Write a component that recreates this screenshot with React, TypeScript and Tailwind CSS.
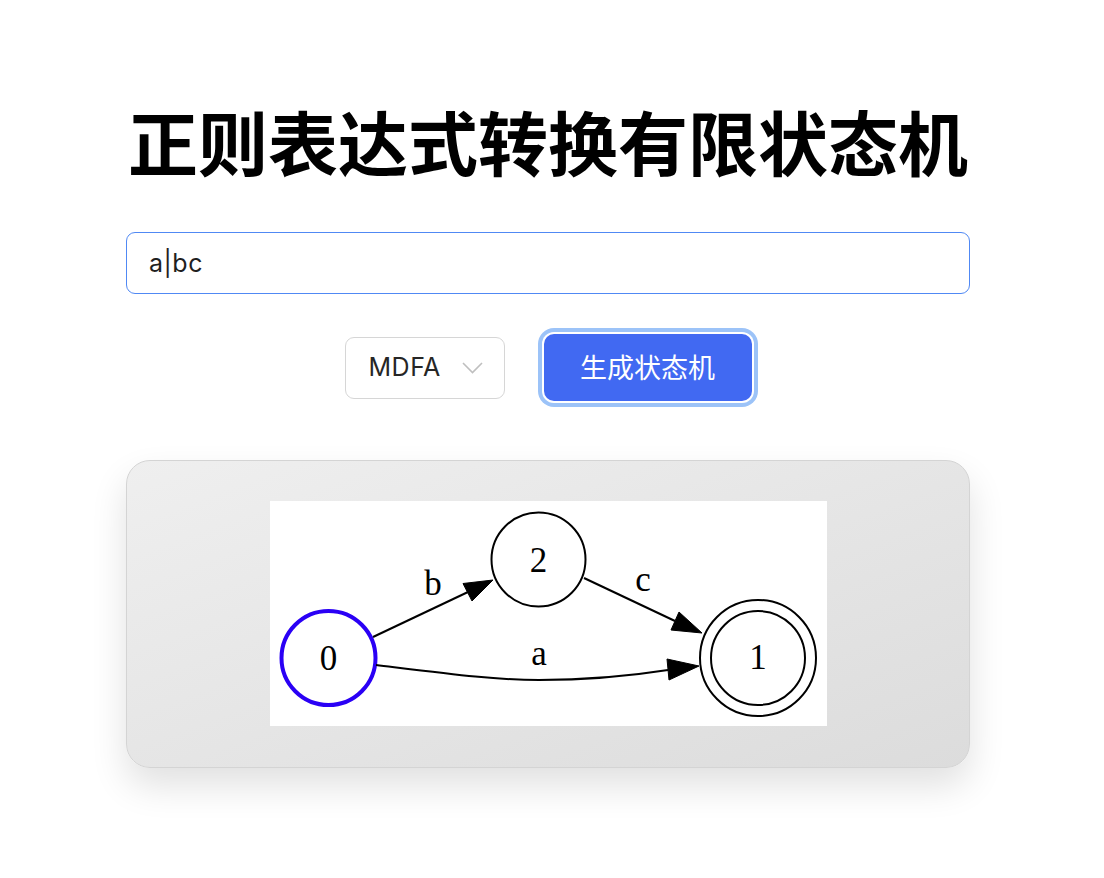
import { useState } from 'react';

const UI_FONT = { fontFamily: 'Inter, "Noto Sans CJK SC", sans-serif' };
const TITLE_FONT = { fontFamily: '"Noto Sans CJK SC", "Noto Sans", sans-serif' };

// State machine drawing (graphviz style output)
const StateGraph = () => (
    <svg width="557" height="225" viewBox="0 0 557 225" className="block bg-white">
        <g fontFamily='"Liberation Serif", serif' fontSize="35" textAnchor="middle" fill="#000">
            {/* node 0 - start */}
            <circle cx="58.5" cy="157" r="47" fill="none" stroke="#2a00f5" strokeWidth="4" />
            <text x="58.5" y="169">0</text>

            {/* node 2 */}
            <circle cx="268.5" cy="58.5" r="47" fill="none" stroke="#000" strokeWidth="2" />
            <text x="268.5" y="71">2</text>

            {/* node 1 - accepting */}
            <circle cx="488" cy="157" r="58" fill="none" stroke="#000" strokeWidth="2" />
            <circle cx="488" cy="157" r="47" fill="none" stroke="#000" strokeWidth="2" />
            <text x="488" y="168">1</text>

            {/* 0 -> 2 : b */}
            <path d="M103 136 L198 91" stroke="#000" strokeWidth="2" fill="none" />
            <polygon points="223,79 193,82.5 202,100" fill="#000" stroke="#000" strokeWidth="1" />
            <text x="163" y="94">b</text>

            {/* 2 -> 1 : c */}
            <path d="M314 77 L405 120" stroke="#000" strokeWidth="2" fill="none" />
            <polygon points="432,132 401,129 409,111" fill="#000" stroke="#000" strokeWidth="1" />
            <text x="373" y="90">c</text>

            {/* 0 -> 1 : a */}
            <path d="M106 164 C180 173 225 179 269 179 C318 179 360 175 398 169" stroke="#000" strokeWidth="2" fill="none" />
            <polygon points="429,165 397,158 399,179" fill="#000" stroke="#000" strokeWidth="1" />
            <text x="269" y="164">a</text>
        </g>
    </svg>
);

const App = () => {
    const [regex, setRegex] = useState('a|bc');

    return (
        <div className="min-h-screen bg-white" style={UI_FONT}>
            <div className="ml-[126px] flex w-[844px] flex-col pt-[106px]">
                <h1 className="text-center text-[70px] leading-none font-bold text-black" style={TITLE_FONT}>
                    正则表达式转换有限状态机
                </h1>

                <input
                    className="mt-[56px] h-[62px] w-full rounded-[9px] border-[1.5px] border-[#5089f4] px-[22px] text-[25px] tracking-[0.02em] text-[#1f1f1f] outline-none"
                    value={regex}
                    onChange={(e) => setRegex(e.target.value)}
                />

                <div className="mt-[40px] flex items-center justify-center gap-[39px]">
                    <div className="flex h-[62px] w-[160px] items-center justify-between rounded-[9px] border border-[#d6d6d6] bg-white pr-[21px] pl-[23px]">
                        <span className="text-[25px] tracking-[0.02em] text-[#262626]">MDFA</span>
                        <svg width="21" height="12" viewBox="0 0 21 12" fill="none">
                            <polyline points="1,1 10.5,10.5 20,1" stroke="#bfbfbf" strokeWidth="1.6" />
                        </svg>
                    </div>
                    <button
                        className="h-[67px] w-[208px] rounded-[10px] bg-[#4169f2] text-[27px] text-white ring-4 ring-[#9cc3f8] ring-offset-2 ring-offset-white"
                        style={TITLE_FONT}
                    >
                        生成状态机
                    </button>
                </div>

                <div className="mt-[59px] flex justify-center rounded-[24px] border border-[#d4d4d4] bg-linear-to-br from-[#efefef] to-[#dcdcdc] pt-[40px] pb-[41px] shadow-[0_18px_36px_rgba(0,0,0,0.12)]">
                    <StateGraph />
                </div>
            </div>
        </div>
    );
};

export default App;
